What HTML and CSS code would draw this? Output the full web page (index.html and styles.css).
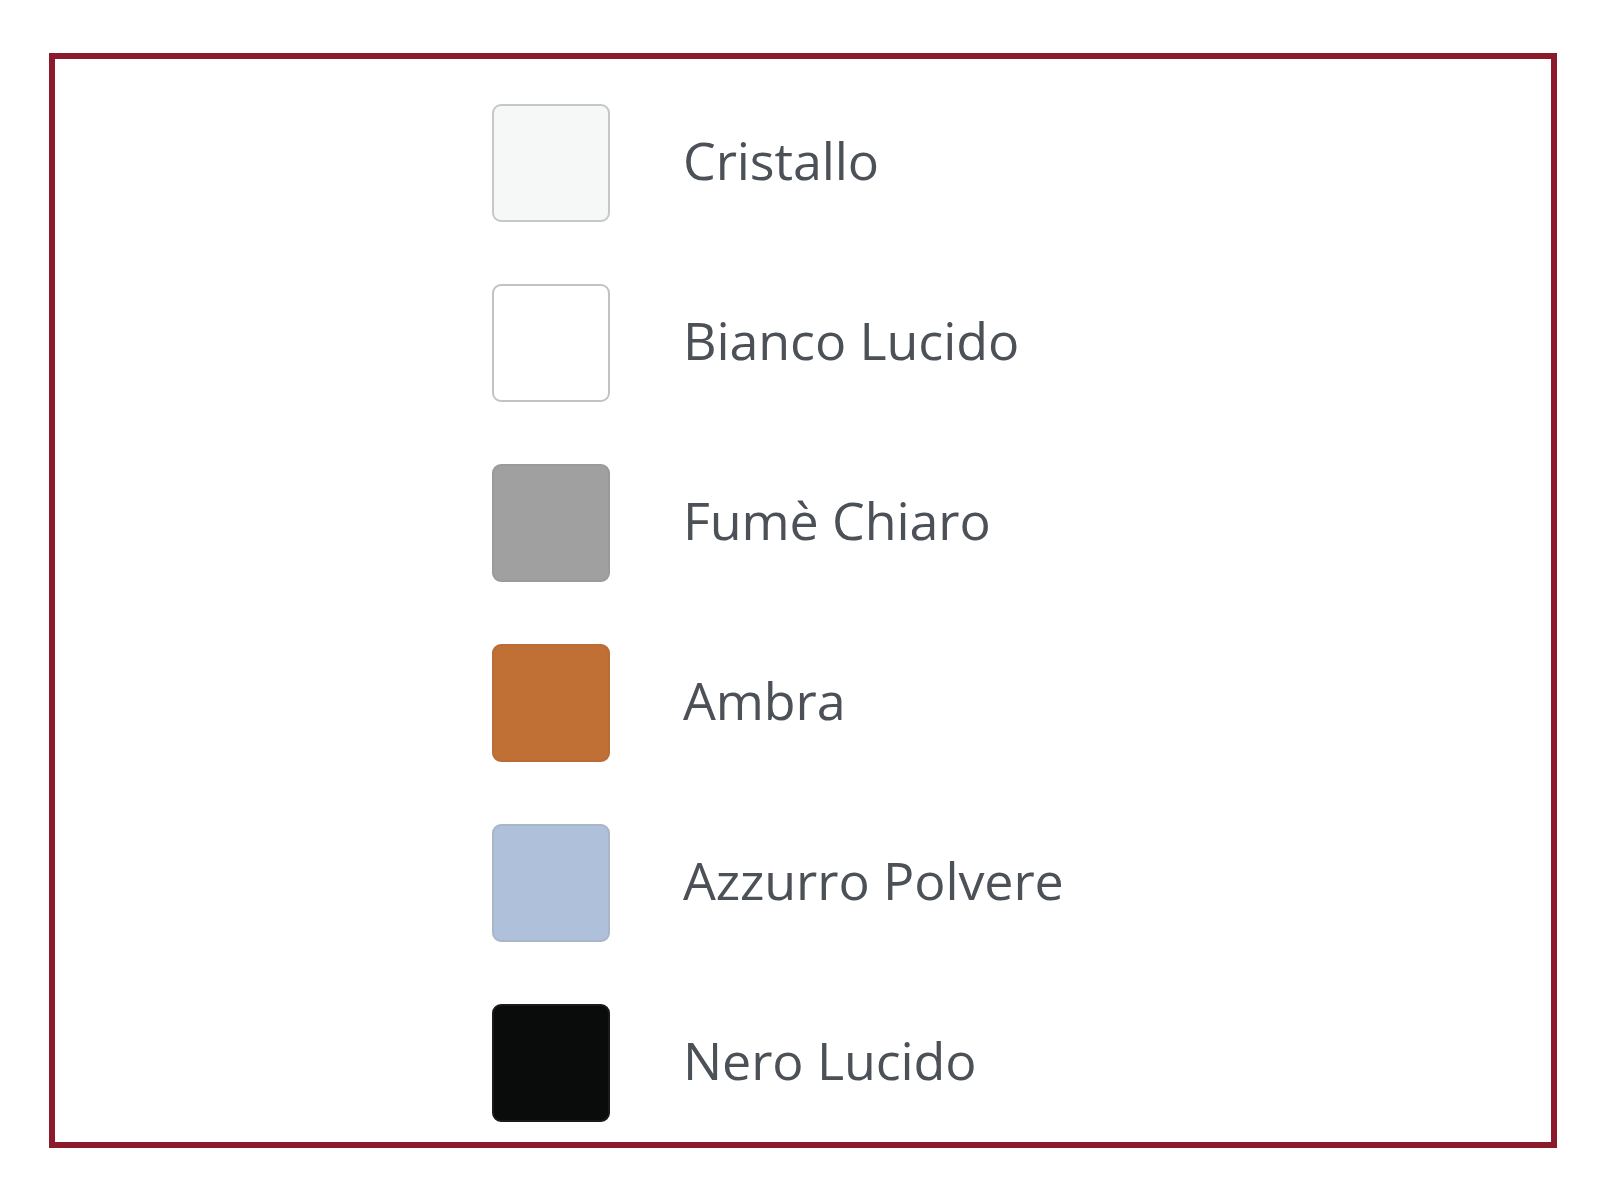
FILE: index.html
```html
<!DOCTYPE html>
<html lang="it">
<head>
<meta charset="utf-8">
<title>Colori</title>
<link rel="stylesheet" href="styles.css">
</head>
<body>
<div class="frame">
  <ul class="colors">
    <li class="color"><span class="swatch cristallo"></span><span class="name">Cristallo</span></li>
    <li class="color"><span class="swatch bianco"></span><span class="name">Bianco Lucido</span></li>
    <li class="color"><span class="swatch fume"></span><span class="name">Fumè Chiaro</span></li>
    <li class="color"><span class="swatch ambra"></span><span class="name">Ambra</span></li>
    <li class="color"><span class="swatch azzurro"></span><span class="name">Azzurro Polvere</span></li>
    <li class="color"><span class="swatch nero"></span><span class="name">Nero Lucido</span></li>
  </ul>
</div>
</body>
</html>
```
FILE: styles.css
```css
html, body {
  margin: 0;
  padding: 0;
  background: #ffffff;
}
body {
  padding: 53px 0 0 49px;
  font-family: "Open Sans", "Noto Sans", sans-serif;
}
.frame {
  box-sizing: border-box;
  width: 1508px;
  height: 1095px;
  border: 6px solid #8a1a2c;
  background: #ffffff;
}
.colors {
  list-style: none;
  margin: 0;
  padding: 45px 0 0 437px;
  display: flex;
  flex-direction: column;
  gap: 62px;
}
.color {
  display: flex;
  align-items: center;
  gap: 73px;
  height: 118px;
}
.swatch {
  box-sizing: border-box;
  flex: none;
  width: 118px;
  height: 118px;
  border-radius: 9px;
  border: 2px solid #c4c4c4;
}
.name {
  font-size: 52px;
  color: #4c5158;
  line-height: 1;
  margin-top: -6px;
  letter-spacing: -0.1px;
}
.cristallo { background: #f6f7f7; border-color: #c6c7c7; }
.bianco { background: #ffffff; border-color: #c2c2c2; }
.fume { background: #a0a0a1; border-color: #9a9a9b; }
.ambra { background: #c06f35; border-color: #b96c38; }
.azzurro { background: #aec0da; border-color: #a9b6c8; }
.nero { background: #0a0b0b; border-color: #1a1a1a; }
```
